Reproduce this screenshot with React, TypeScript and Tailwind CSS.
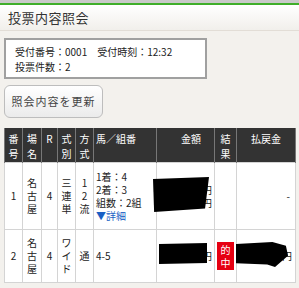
import React from 'react';

const font = { fontFamily: '"Noto Sans CJK JP", "Noto Sans", sans-serif' };

const Redact = ({ points }: { points: string }) => (
  <svg className="absolute inset-0 w-full h-full" viewBox="0 0 100 100" preserveAspectRatio="none">
    <polygon points={points} fill="#000" />
  </svg>
);

export default function App() {
  const th = 'border-x border-[#777] align-top px-0 pt-[3px] font-normal text-white';
  const td = 'border border-[#d4d4d4] bg-white align-middle';

  return (
    <div className="w-[299px] h-[288px] bg-[#f3f1ed] overflow-hidden text-[#222]" style={font}>
      {/* title bar */}
      <div className="h-[3px] bg-[#c9c9c9]" />
      <div className="h-[2px] bg-[#3fae2a]" />
      <div className="h-[26px] bg-gradient-to-b from-white to-[#f1efeb] border-b border-[#e2ddd6] flex items-center pl-[8px] text-[13px] tracking-[0.5px] text-[#333]">
        投票内容照会
      </div>

      {/* receipt box */}
      <div className="ml-[4px] mt-[7px] w-[203px] h-[41px] bg-white border-2 border-[#a0a0a0] pl-[9px] pt-[4px] text-[10px] leading-[15px]">
        <div>受付番号：0001　受付時刻：12:32</div>
        <div>投票件数：2</div>
      </div>

      {/* refresh button */}
      <button className="ml-[4px] mt-[6px] w-[99px] h-[33px] rounded-[6px] border border-[#bdbdbd] bg-gradient-to-b from-white to-[#ebebeb] text-[11px] text-[#444] tracking-[1px]">
        照会内容を更新
      </button>

      {/* table */}
      <table className="ml-[4px] mt-[10px] border-collapse table-fixed w-[291px] text-[10px] leading-[13px]">
        <colgroup>
          <col className="w-[18px]" />
          <col className="w-[19px]" />
          <col className="w-[16px]" />
          <col className="w-[18px]" />
          <col className="w-[18px]" />
          <col className="w-[63px]" />
          <col className="w-[58px]" />
          <col className="w-[22px]" />
          <col className="w-[59px]" />
        </colgroup>
        <thead>
          <tr className="bg-[#333] h-[34px] leading-[15px]">
            <th className={`${th} text-center`}>番<br />号</th>
            <th className={`${th} text-center`}>場<br />名</th>
            <th className={`${th} text-center`}>R</th>
            <th className={`${th} text-center`}>式<br />別</th>
            <th className={`${th} text-center`}>方<br />式</th>
            <th className={`${th} text-left pl-[2px]`}>馬／組番</th>
            <th className={`${th} text-right pr-[13px]`}>金額</th>
            <th className={`${th} text-center`}>結<br />果</th>
            <th className={`${th} text-center`}>払戻金</th>
          </tr>
        </thead>
        <tbody>
          <tr className="h-[67px]">
            <td className={`${td} text-center`}>1</td>
            <td className={`${td} text-center`}>名<br />古<br />屋</td>
            <td className={`${td} text-center`}>4</td>
            <td className={`${td} text-center`}>三<br />連<br />単</td>
            <td className={`${td} text-center`}>1<br />2<br />流</td>
            <td className={`${td} pl-[2px]`}>
              1着：4<br />2着：3<br />組数：2組<br />
              <span className="text-[#1a5fc4]">▼詳細</span>
            </td>
            <td className={`${td} text-right pr-[2px]`}>
              <div className="relative">
                <div>0000円</div>
                <div>0000円</div>
                <div className="absolute left-[-4px] top-[-6px] w-[56px] h-[35px]">
                  <Redact points="0,6 100,0 93,90 2,100" />
                </div>
              </div>
            </td>
            <td className={td}></td>
            <td className={`${td} text-right pr-[5px]`}>-</td>
          </tr>
          <tr className="h-[53px]">
            <td className={`${td} text-center`}>2</td>
            <td className={`${td} text-center`}>名<br />古<br />屋</td>
            <td className={`${td} text-center`}>4</td>
            <td className={`${td} text-center`}>ワ<br />イ<br />ド</td>
            <td className={`${td} text-center`}>通</td>
            <td className={`${td} pl-[2px]`}>4-5</td>
            <td className={`${td} text-right pr-[2px]`}>
              <div className="relative">
                <div>0000円</div>
                <div className="absolute left-[2px] top-[-6px] w-[48px] h-[21px]">
                  <Redact points="0,5 100,0 100,95 0,100" />
                </div>
              </div>
            </td>
            <td className={`${td} text-center`}>
              <div className="mx-auto w-[17px] h-[28px] bg-[#e60012] text-white flex flex-col items-center justify-center leading-[13px]">
                <span>的</span>
                <span>中</span>
              </div>
            </td>
            <td className={`${td} text-right pr-[3px]`}>
              <div className="relative">
                <div>000000円</div>
                <div className="absolute left-[-1px] top-[-7px] w-[52px] h-[25px]">
                  <Redact points="0,8 70,0 96,15 100,55 75,100 60,90 0,85" />
                </div>
              </div>
            </td>
          </tr>
        </tbody>
      </table>
    </div>
  );
}
